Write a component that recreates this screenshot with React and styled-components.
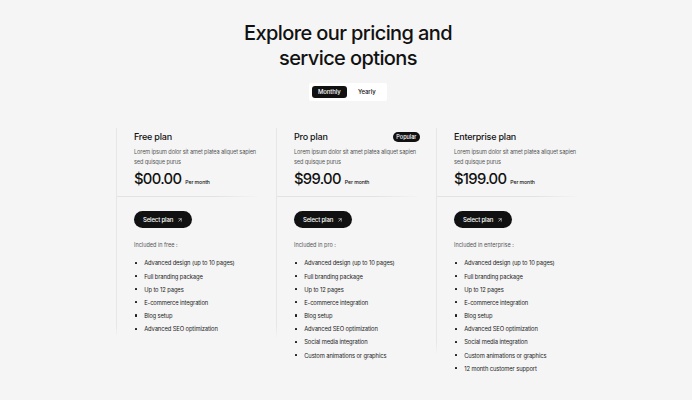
import styled, {createGlobalStyle} from 'styled-components';
import {ArrowUpRight} from 'lucide-react';

const GlobalStyle = createGlobalStyle`
  body {
    margin: 0;
    background: #f5f5f5;
    font-family: Inter, 'Noto Sans', sans-serif;
    color: #111;
  }
`;

const Page = styled.div`
  display: flex;
  flex-direction: column;
  align-items: center;
  padding: 21px 0 0 4px;
  min-height: 400px;
  box-sizing: border-box;
`;

const Title = styled.h1`
  margin: 0;
  font-size: 20px;
  line-height: 25.4px;
  font-weight: 500;
  letter-spacing: -0.6px;
  text-align: center;
`;

const Toggle = styled.div`
  display: flex;
  align-items: center;
  gap: 3px;
  margin-top: 11px;
  padding: 3px;
  width: 78px;
  height: 18px;
  box-sizing: border-box;
  background: #fff;
  border-radius: 2px;
`;

const ToggleOption = styled.div`
  display: flex;
  align-items: center;
  justify-content: center;
  width: 37px;
  height: 12px;
  border-radius: 3px;
  font-size: 6px;
  font-weight: 500;
  letter-spacing: -0.1px;
  background: ${(p) => (p.$active ? '#111' : 'transparent')};
  color: ${(p) => (p.$active ? '#fff' : '#111')};
`;

const Grid = styled.div`
  display: grid;
  grid-template-columns: repeat(3, 144px);
  align-items: start;
  gap: 16px;
  margin-top: 27px;
`;

const Card = styled.div`
  display: flex;
  flex-direction: column;
  border-left: 1px solid;
  border-image: linear-gradient(
      to bottom,
      #e6e6e6 0px,
      #e6e6e6 ${(p) => p.$line - 14}px,
      rgba(230, 230, 230, 0) ${(p) => p.$line}px
    )
    1;
  padding-top: 3px;
`;

const Header = styled.div`
  padding: 0 0 7px 17px;
  border-bottom: 1px solid;
  border-image: linear-gradient(to right, #e3e3e3 0%, #e3e3e3 70%, rgba(227, 227, 227, 0) 100%) 1;
`;

const NameRow = styled.div`
  display: flex;
  align-items: center;
  justify-content: space-between;
  height: 12px;
`;

const PlanName = styled.div`
  font-size: 9px;
  font-weight: 500;
  letter-spacing: -0.2px;
`;

const Badge = styled.div`
  background: #111;
  color: #fff;
  font-size: 5.5px;
  font-weight: 500;
  height: 10px;
  padding: 0 3.5px;
  border-radius: 5px;
  display: flex;
  align-items: center;
`;

const Desc = styled.p`
  margin: 5px 0 0 0;
  font-size: 5.6px;
  line-height: 9.7px;
  letter-spacing: -0.12px;
  color: #555;
`;

const PriceRow = styled.div`
  display: flex;
  align-items: baseline;
  gap: 4px;
  margin-top: 3px;
`;

const Price = styled.div`
  font-size: 14.8px;
  line-height: 19px;
  font-weight: 500;
  letter-spacing: -0.7px;
`;

const Per = styled.span`
  font-size: 5.2px;
  font-weight: 500;
  letter-spacing: -0.1px;
`;

const Body = styled.div`
  padding: 14px 0 0 17px;
`;

const SelectButton = styled.button`
  display: flex;
  align-items: center;
  gap: 4px;
  height: 17px;
  padding: 0 9px;
  border: none;
  border-radius: 9px;
  background: #111;
  color: #fff;
  font-family: inherit;
  font-size: 6px;
  font-weight: 500;
  letter-spacing: -0.15px;
`;

const Included = styled.div`
  margin-top: 14px;
  font-size: 5.5px;
  color: #555;
`;

const List = styled.ul`
  list-style: none;
  margin: 8px 0 0;
  padding: 0;
`;

const Item = styled.li`
  display: flex;
  align-items: center;
  gap: 7px;
  height: 13.2px;
  font-size: 5.8px;
  letter-spacing: -0.1px;
  color: #222;
  &::before {
    content: '';
    width: 2.2px;
    height: 2.2px;
    margin-left: 1px;
    background: #222;
    border-radius: 0.5px;
  }
`;

const features = [
  'Advanced design (up to 10 pages)',
  'Full branding package',
  'Up to 12 pages',
  'E-commerce integration',
  'Blog setup',
  'Advanced SEO optimization',
  'Social media integration',
  'Custom animations or graphics',
  '12 month customer support',
];

const plans = [
  {name: 'Free plan', price: '$00.00', key: 'free', count: 6, line: 210},
  {name: 'Pro plan', price: '$99.00', key: 'pro', count: 8, line: 210, popular: true},
  {name: 'Enterprise plan', price: '$199.00', key: 'enterprise', count: 9, line: 226},
];

const PlanCard = ({plan}) => (
  <Card $line={plan.line}>
    <Header>
      <NameRow>
        <PlanName>{plan.name}</PlanName>
        {plan.popular && <Badge>Popular</Badge>}
      </NameRow>
      <Desc>Lorem ipsum dolor sit amet platea aliquet sapien sed quisque purus</Desc>
      <PriceRow>
        <Price>{plan.price}</Price>
        <Per>Per month</Per>
      </PriceRow>
    </Header>
    <Body>
      <SelectButton>
        Select plan <ArrowUpRight size={6} strokeWidth={2.2} />
      </SelectButton>
      <Included>Included in {plan.key} :</Included>
      <List>
        {features.slice(0, plan.count).map((f) => (
          <Item key={f}>{f}</Item>
        ))}
      </List>
    </Body>
  </Card>
);

const App = () => {
  return (
    <Page>
      <GlobalStyle />
      <Title>
        Explore our pricing and
        <br />
        service options
      </Title>
      <Toggle>
        <ToggleOption $active>Monthly</ToggleOption>
        <ToggleOption>Yearly</ToggleOption>
      </Toggle>
      <Grid>
        {plans.map((p) => (
          <PlanCard key={p.key} plan={p} />
        ))}
      </Grid>
    </Page>
  );
};

export default App;
